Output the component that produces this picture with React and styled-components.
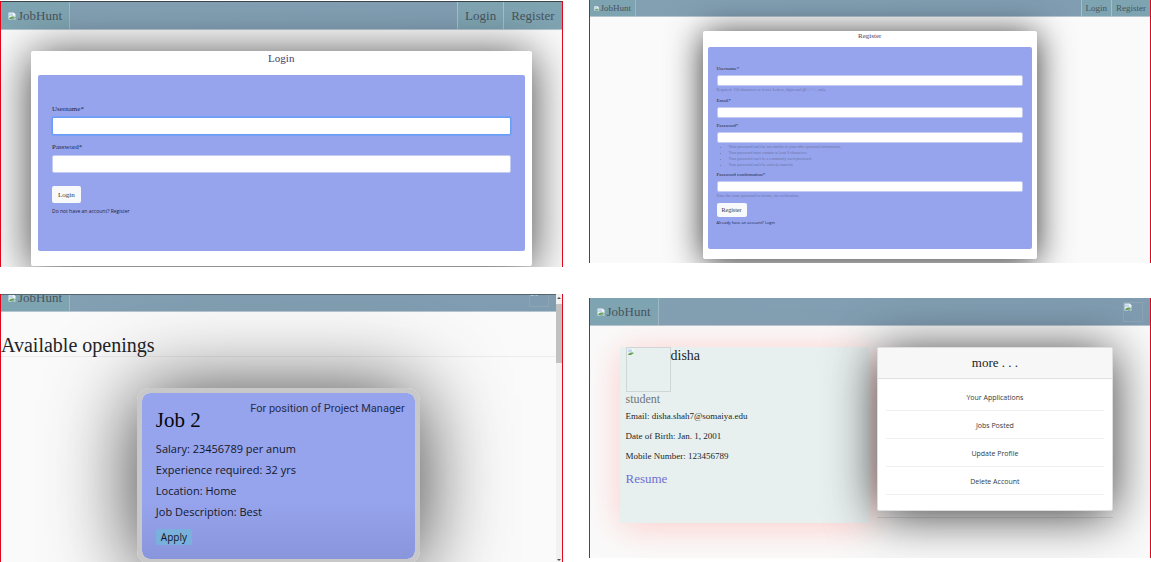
import React from "react";
import styled, { createGlobalStyle } from "styled-components";

const serif = '"Liberation Serif", "Times New Roman", serif';
const sans = '"Open Sans", "Noto Sans", sans-serif';

const GlobalStyle = createGlobalStyle`
  * { box-sizing: border-box; }
  body { margin: 0; background: #fff; font-family: ${serif}; color: #212529; }
  h1, h2, h3, p, ul { margin: 0; font-weight: 400; }
  a { color: inherit; text-decoration: none; }
`;

const Board = styled.main`
  display: grid;
  grid-template-columns: 1fr 1fr;
  column-gap: 26px;
  height: 100vh;
  overflow: hidden;
`;

const Column = styled.div`
  display: flex;
  flex-direction: column;
  min-width: 0;
  min-height: 0;
  gap: ${(p) => p.$gap}px;
  padding: ${(p) => p.$pad || "0"};
`;

const Screen = styled.section`
  display: flex;
  flex-direction: column;
  flex: ${(p) => (p.$fill ? "1 1 0" : "none")};
  min-height: 0;
  overflow: hidden;
  background: #fafafa;
  border: solid #e0061c;
  border-width: 0 1px;
`;

const Nav = styled.nav`
  display: flex;
  flex: none;
  justify-content: space-between;
  align-items: ${(p) => (p.$cut ? "flex-end" : "stretch")};
  height: ${(p) => p.$height}px;
  overflow: hidden;
  background: linear-gradient(100deg, #83a0b3, #809cb1);
  border-top: ${(p) => (p.$edge ? `1px solid ${p.$edge}` : "none")};
  border-bottom: 1px solid #b4c5d0;
  font-size: ${(p) => p.$size}px;
  color: #46545e;
`;

const NavGroup = styled.div`
  display: flex;
`;

const Brand = styled.a`
  display: flex;
  align-items: center;
  gap: 2px;
  height: ${(p) => p.$height || "auto"};
  padding: ${(p) => p.$pad || "0 7px"};
  background: #7fa4b1;
  border-right: 1px solid #9db9c5;
`;

const NavLink = styled.a`
  display: flex;
  align-items: center;
  padding: 0 ${(p) => p.$pad}px;
  background: #7fa4b1;
  border-left: 1px solid #a5bfca;
`;

const NavAvatar = styled.a`
  display: flex;
  flex: none;
  width: 20px;
  height: 20px;
  margin: 4px 7px;
  border: 1px solid #8fa6b2;
`;

const Stage = styled.div`
  flex: 1;
  padding: ${(p) => p.$pad};
`;

const FormCard = styled.article`
  padding: ${(p) => p.$pad};
  background: #fff;
  border-radius: 2px;
  box-shadow: ${(p) => p.$shadow};
`;

const CardTitle = styled.h2`
  padding-bottom: ${(p) => p.$after}px;
  font-size: ${(p) => p.$size}px;
  line-height: ${(p) => p.$line}px;
  text-align: center;
  color: #473d68;
`;

const Form = styled.form`
  display: flex;
  flex-direction: column;
  align-items: flex-start;
  padding: ${(p) => p.$pad};
  background: #96a4ed;
  border-radius: 2px;
`;

const Field = styled.div`
  width: 100%;
  margin-bottom: ${(p) => p.$after}px;
`;

const Label = styled.label`
  display: block;
  padding-bottom: ${(p) => p.$gap}px;
  font-size: ${(p) => p.$size}px;
  line-height: ${(p) => p.$line}px;
  color: #20253f;
`;

const Input = styled.input`
  display: block;
  width: 100%;
  height: ${(p) => p.$height}px;
  padding: 0 4px;
  font: ${(p) => p.$size}px ${serif};
  background: #fff;
  border: 1px solid ${(p) => (p.$active ? "#6a9df6" : "#c3cbf3")};
  border-radius: 2px;
  outline: none;
  box-shadow: ${(p) => (p.$active ? "0 0 0 1px #78a0f5" : "none")};
`;

const Help = styled.p`
  padding-top: 1px;
  font-size: 4px;
  line-height: 6px;
  color: #6c76a6;
`;

const HelpList = styled.ul`
  padding: 1px 0 0 12px;
  font-size: 4px;
  line-height: 6px;
  color: #6c76a6;
`;

const Submit = styled.button`
  height: ${(p) => p.$height}px;
  padding: 0 ${(p) => p.$pad}px;
  font: ${(p) => p.$size}px ${serif};
  color: #343a40;
  background: #f8f9fa;
  border: 0;
  border-radius: 2px;
`;

const FormNote = styled.p`
  margin-top: ${(p) => p.$before}px;
  font: ${(p) => p.$size}px/${(p) => p.$line}px ${sans};
  color: #20253f;
`;

const Scroller = styled.div`
  display: flex;
  flex: 1;
  min-height: 0;
`;

const ScrollBody = styled.div`
  display: flex;
  flex-direction: column;
  flex: 1;
  min-width: 0;
  overflow: hidden;
`;

const ScrollTrack = styled.div`
  display: flex;
  flex-direction: column;
  justify-content: space-between;
  width: 6px;
  background: #f1f1f1;
`;

const ScrollThumb = styled.div`
  height: 59px;
  margin-bottom: auto;
  background: #c1c1c1;
`;

const PageHeading = styled.h1`
  flex: none;
  padding-top: 22px;
  font-size: 20px;
  line-height: 22px;
  border-bottom: 1px solid #ececec;
`;

const JobCard = styled.article`
  flex: none;
  align-self: center;
  width: 51%;
  height: 176px;
  margin-top: 31px;
  padding: 9px 10px 0 14px;
  background: linear-gradient(#96a4ed 65%, #8996dc) padding-box;
  border: 5px solid #c8c8c8;
  border-radius: 13px;
  box-shadow: 0 4px 85px rgba(0, 0, 0, 0.78);
  font: 11px/21px ${sans};
  color: #14172a;
`;

const JobHead = styled.header`
  display: flex;
  justify-content: space-between;
  align-items: flex-start;
`;

const Position = styled.p`
  font: 11px/13px Roboto, sans-serif;
  color: #282d4c;
`;

const JobTitle = styled.h2`
  padding: 6px 0;
  font: 21px/24px ${serif};
  color: #05060c;
`;

const Apply = styled.button`
  display: block;
  height: 16px;
  margin-top: 7px;
  padding: 0 5px;
  font: 10px ${sans};
  color: #101322;
  background: #7ab0dc;
  border: 0;
  border-radius: 2px;
`;

const ProfileStage = styled.div`
  display: grid;
  grid-template-columns: 249fr 236fr;
  align-items: start;
  gap: 8px;
  padding: 21px 37px 35px 30px;
`;

const ProfileCard = styled.article`
  height: 176px;
  padding: 0 6px;
  background: #e8f0ef;
  box-shadow: 0 4px 34px rgba(255, 130, 120, 0.38);
`;

const ProfileHead = styled.div`
  display: flex;
  align-items: flex-start;
`;

const ProfileName = styled.h2`
  font-size: 14px;
  line-height: 17px;
`;

const Photo = styled.div`
  display: flex;
  width: 45px;
  height: 45px;
  border: 1px solid #cfd6d5;
`;

const Role = styled.h3`
  font-size: 12px;
  line-height: 14px;
  color: #6c757d;
`;

const Detail = styled.p`
  font-size: 9px;
  line-height: 20px;
`;

const Resume = styled.a`
  display: inline-block;
  margin-top: 4px;
  font-size: 13px;
  line-height: 18px;
  color: #6f6fd0;
`;

const Side = styled.aside`
  position: relative;
  padding-bottom: 6px;
  border-bottom: 1px solid rgba(0, 0, 0, 0.1);
`;

const MenuCard = styled.div`
  padding-bottom: 15px;
  background: #fff;
  border: 1px solid #dfdfdf;
  border-radius: 2px;
  box-shadow: 0 4px 50px rgba(0, 0, 0, 0.78);
`;

const MenuTitle = styled.h2`
  font-size: 13px;
  line-height: 30px;
  text-align: center;
  background: #f7f7f7;
  border-bottom: 1px solid #dfdfdf;
`;

const MenuItems = styled.div`
  padding-top: 4px;
`;

const MenuLink = styled.a`
  display: block;
  margin: 0 8px;
  padding: 10px 0 7px;
  font: 7px/10px ${sans};
  text-align: center;
  color: #343a40;
  border-bottom: 1px solid #f0f0f0;
`;

function BrokenImage({ size = 8 }) {
  return (
    <svg width={size} height={size} viewBox="0 0 16 16" aria-hidden="true">
      <path d="M1 1h10l4 4v5l-8 5H1z" fill="#e9eff4" />
      <path d="M2 3h8v5H2z" fill="#c3d7ef" />
      <path d="M2 14c2-5 7-6 12-4l-6 4z" fill="#62a552" />
      <path d="M11 1v4h4z" fill="#fff" />
      <path d="M15 12v3h-5z" fill="#e9eff4" />
    </svg>
  );
}

function Arrow({ down }) {
  return (
    <svg width="6" height="10" viewBox="0 0 6 10" aria-hidden="true">
      <path d={down ? "M1 7h4L3 9z" : "M1 5h4L3 3z"} fill="#505050" />
    </svg>
  );
}

function TextField({ id, label, type = "text", height, size, line, gap, after, active, children }) {
  return (
    <Field $after={after}>
      <Label htmlFor={id} $size={size} $line={line} $gap={gap}>{label}</Label>
      <Input id={id} type={type} $height={height} $size={size} $active={active} />
      {children}
    </Field>
  );
}

function LoginScreen() {
  const field = { height: 18, size: 7, line: 10, gap: 3 };
  return (
    <Screen>
      <Nav $height={29} $size={13} $edge="#3c444a">
        <Brand href="#"><BrokenImage />JobHunt</Brand>
        <NavGroup>
          <NavLink href="#" $pad={7}>Login</NavLink>
          <NavLink href="#" $pad={7}>Register</NavLink>
        </NavGroup>
      </Nav>
      <Stage $pad="21px 30px 1px">
        <FormCard $pad="0 7px 15px" $shadow="0 4px 45px rgba(0, 0, 0, 0.75)">
          <CardTitle $size={11} $line={15} $after={9}>Login</CardTitle>
          <Form $pad="29px 14px 36px">
            <TextField id="login-user" label="Username*" after={7} active {...field} />
            <TextField id="login-pass" label="Password*" type="password" after={13} {...field} />
            <Submit type="button" $height={17} $pad={6} $size={7}>Login</Submit>
            <FormNote $size={5} $line={8} $before={4}>
              Do not have an account? <a href="#">Register</a>
            </FormNote>
          </Form>
        </FormCard>
      </Stage>
    </Screen>
  );
}

function RegisterScreen() {
  const field = { height: 11, size: 5, line: 8, gap: 2 };
  return (
    <Screen>
      <Nav $height={17} $size={9}>
        <Brand href="#" $pad="0 4px"><BrokenImage size={5} />JobHunt</Brand>
        <NavGroup>
          <NavLink href="#" $pad={4}>Login</NavLink>
          <NavLink href="#" $pad={4}>Register</NavLink>
        </NavGroup>
      </Nav>
      <Stage $pad="14px 113px 4px">
        <FormCard $pad="0 5px 10px" $shadow="0 3px 34px rgba(0, 0, 0, 0.8)">
          <CardTitle $size={7} $line={10} $after={6}>Register</CardTitle>
          <Form $pad="18px 9px 23px">
            <TextField id="reg-user" label="Username*" after={4} {...field}>
              <Help>Required. 150 characters or fewer. Letters, digits and @/./+/-/_ only.</Help>
            </TextField>
            <TextField id="reg-email" label="Email*" type="email" after={4} {...field} />
            <TextField id="reg-pass" label="Password*" type="password" after={3} {...field}>
              <HelpList>
                <li>Your password can't be too similar to your other personal information.</li>
                <li>Your password must contain at least 8 characters.</li>
                <li>Your password can't be a commonly used password.</li>
                <li>Your password can't be entirely numeric.</li>
              </HelpList>
            </TextField>
            <TextField id="reg-confirm" label="Password confirmation*" type="password" after={4} {...field}>
              <Help>Enter the same password as before, for verification.</Help>
            </TextField>
            <Submit type="button" $height={14} $pad={5} $size={6}>Register</Submit>
            <FormNote $size={4} $line={6} $before={3}>
              Already have an account? <a href="#">Login</a>
            </FormNote>
          </Form>
        </FormCard>
      </Stage>
    </Screen>
  );
}

function OpeningsScreen() {
  return (
    <Screen $fill>
      <Scroller>
        <ScrollBody>
          <Nav $height={18} $size={13} $edge="#55666f" $cut>
            <Brand href="#" $height="26px"><BrokenImage />JobHunt</Brand>
            <NavAvatar href="#" aria-label="Profile"><BrokenImage /></NavAvatar>
          </Nav>
          <PageHeading>Available openings</PageHeading>
          <JobCard>
            <JobHead>
              <JobTitle>Job 2</JobTitle>
              <Position>For position of Project Manager</Position>
            </JobHead>
            <p>Salary: 23456789 per anum</p>
            <p>Experience required: 32 yrs</p>
            <p>Location: Home</p>
            <p>Job Description: Best</p>
            <Apply type="button">Apply</Apply>
          </JobCard>
        </ScrollBody>
        <ScrollTrack>
          <Arrow />
          <ScrollThumb />
          <Arrow down />
        </ScrollTrack>
      </Scroller>
    </Screen>
  );
}

function ProfileScreen() {
  const links = ["Your Applications", "Jobs Posted", "Update Profile", "Delete Account"];
  return (
    <Screen>
      <Nav $height={28} $size={13}>
        <Brand href="#"><BrokenImage />JobHunt</Brand>
        <NavAvatar href="#" aria-label="Profile"><BrokenImage /></NavAvatar>
      </Nav>
      <ProfileStage>
        <ProfileCard>
          <ProfileHead>
            <Photo><BrokenImage /></Photo>
            <ProfileName>disha</ProfileName>
          </ProfileHead>
          <Role>student</Role>
          <Detail>Email: disha.shah7@somaiya.edu</Detail>
          <Detail>Date of Birth: Jan. 1, 2001</Detail>
          <Detail>Mobile Number: 123456789</Detail>
          <Resume href="#">Resume</Resume>
        </ProfileCard>
        <Side>
          <MenuCard>
            <MenuTitle>more . . .</MenuTitle>
            <MenuItems>
              {links.map((text) => (
                <MenuLink href="#" key={text}>{text}</MenuLink>
              ))}
            </MenuItems>
          </MenuCard>
        </Side>
      </ProfileStage>
    </Screen>
  );
}

export default function App() {
  return (
    <>
      <GlobalStyle />
      <Board>
        <Column $gap={27} $pad="1px 0 0">
          <LoginScreen />
          <OpeningsScreen />
        </Column>
        <Column $gap={35}>
          <RegisterScreen />
          <ProfileScreen />
        </Column>
      </Board>
    </>
  );
}
